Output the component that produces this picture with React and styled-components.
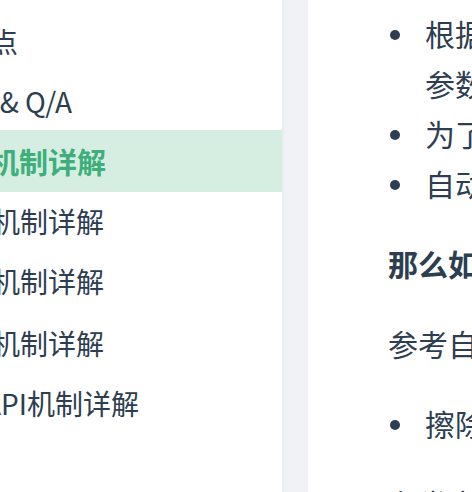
import React from 'react';
import styled, { createGlobalStyle } from 'styled-components';

const GlobalStyle = createGlobalStyle`
  * { box-sizing: border-box; }
  body {
    margin: 0;
    color: #2c3e50;
    background: #fff;
    overflow: hidden;
  }
`;

const Layout = styled.div`
  display: grid;
  grid-template-columns: 284px 24px minmax(0, 1fr);
  height: 100vh;
  overflow: hidden;
`;

const Sidebar = styled.nav`
  display: flex;
  flex-direction: column;
  gap: 2px;
  border-right: 2px solid #eaecef;
  padding-top: 10px;
  overflow: hidden;
  font-family: 'Noto Sans CJK SC', sans-serif;
`;

const SidebarList = styled.ul`
  list-style: none;
  margin: 0;
  padding: 0;
  display: grid;
  grid-auto-rows: 60px;
`;

const SidebarLink = styled.a`
  display: flex;
  align-items: center;
  height: 62px;
  font-size: ${(p) => (p.$active ? 29 : 28)}px;
  line-height: 40px;
  white-space: nowrap;
  text-decoration: none;
  color: ${(p) => (p.$active ? '#3eaf7c' : 'inherit')};
  font-weight: ${(p) => (p.$active ? 700 : 400)};
  background: ${(p) => (p.$active ? '#d6eee1' : 'transparent')};
`;

const LinkLabel = styled.span`
  display: flex;
  justify-content: flex-end;
  width: ${(p) => p.$width}px;
`;

const Gutter = styled.div`
  background: #f1f2f6;
`;

const Article = styled.main`
  padding: 10px 0 0 80px;
  overflow: hidden;
  white-space: nowrap;
  font-family: Inter, 'Noto Sans CJK SC', sans-serif;
  font-size: 30px;
  line-height: 50px;
`;

const Bullets = styled.ul`
  list-style: none;
  margin: 0 0 30px;
  padding: 0;
`;

const Bullet = styled.li`
  display: grid;
  grid-template-columns: 37px 1fr;

  &::before {
    content: '';
    width: 10px;
    height: 10px;
    margin: 20px 0 0 2px;
    border-radius: 50%;
    background: #2c3e50;
  }
`;

const Paragraph = styled.p`
  margin: 0 0 30px;
  font-weight: ${(p) => (p.$strong ? 700 : 400)};
`;

const groups = [
  [
    { label: '点', width: 18 },
    { label: '& Q/A', width: 72 },
    { label: '机制详解', width: 106, active: true },
    { label: '机制详解', width: 104 },
    { label: '机制详解', width: 104 },
  ],
  [
    { label: '机制详解', width: 104 },
    { label: 'API机制详解', width: 139 },
  ],
];

export default function App() {
  return (
    <>
      <GlobalStyle />
      <Layout>
        <Sidebar>
          {groups.map((links, g) => (
            <SidebarList key={g}>
              {links.map((link, i) => (
                <li key={i}>
                  <SidebarLink href="#" $active={link.active} aria-current={link.active ? 'page' : undefined}>
                    <LinkLabel $width={link.width}>{link.label}</LinkLabel>
                  </SidebarLink>
                </li>
              ))}
            </SidebarList>
          ))}
        </Sidebar>
        <Gutter />
        <Article>
          <Bullets>
            <Bullet><span>根据<br />参数</span></Bullet>
            <Bullet>为了</Bullet>
            <Bullet>自动</Bullet>
          </Bullets>
          <Paragraph $strong>那么如</Paragraph>
          <Paragraph>参考自</Paragraph>
          <Bullets>
            <Bullet>擦除</Bullet>
          </Bullets>
          <Paragraph>在类方</Paragraph>
        </Article>
      </Layout>
    </>
  );
}
